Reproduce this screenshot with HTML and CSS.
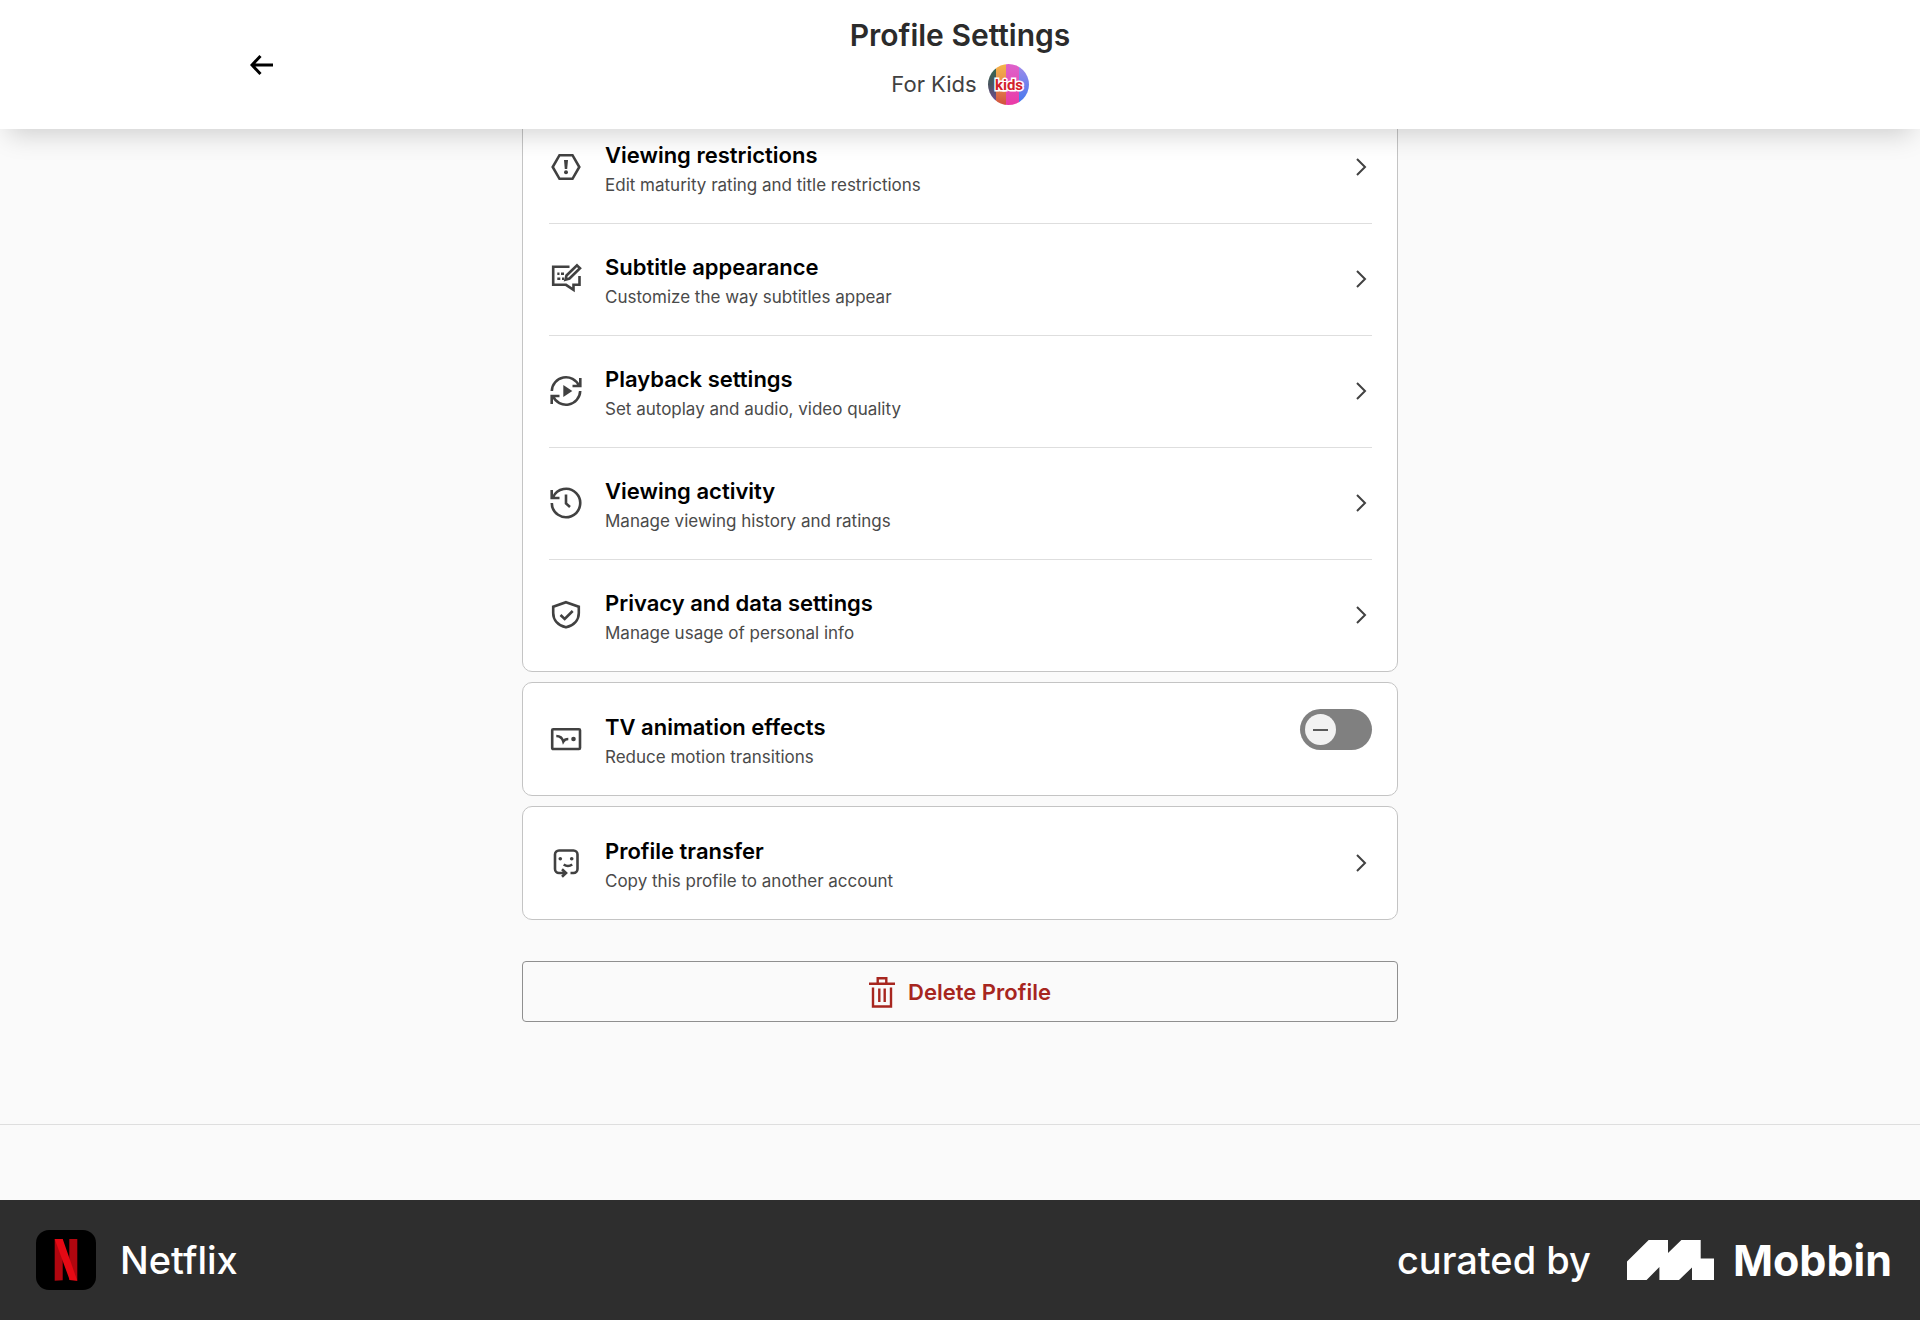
FILE: index.html
```html
<!DOCTYPE html>
<html lang="en">
<head>
<meta charset="utf-8">
<meta name="viewport" content="width=device-width, initial-scale=1">
<title>Profile Settings</title>
<link rel="stylesheet" href="styles.css">
</head>
<body>
<header class="header">
  <button class="back" type="button" aria-label="Back">
    <svg width="24" height="24" viewBox="0 0 24 24" fill="none" stroke="currentColor" stroke-width="3"><path d="M23 12H2M10.500 3L2 12l8.500 9"/></svg>
  </button>
  <div class="heading">
    <h1 class="title">Profile Settings</h1>
    <div class="profile">
      <span>For Kids</span>
      <svg class="avatar" viewBox="0 0 41 41" role="img" aria-label="Kids profile">
        <defs>
          <clipPath id="round"><circle cx="20.500" cy="20.500" r="20.500"/></clipPath>
          <linearGradient id="s1" x2="0" y2="1"><stop offset="0" stop-color="#2f6b4a"/><stop offset=".5" stop-color="#4a5560"/><stop offset="1" stop-color="#7a4a9c"/></linearGradient>
          <linearGradient id="s2" x2="0" y2="1"><stop offset="0" stop-color="#f4b54a"/><stop offset=".5" stop-color="#e98a4c"/><stop offset="1" stop-color="#d0503f"/></linearGradient>
          <linearGradient id="s3" x2="0" y2="1"><stop offset="0" stop-color="#dd62cb"/><stop offset="1" stop-color="#ea3aa6"/></linearGradient>
          <linearGradient id="s4" x2="0" y2="1"><stop offset="0" stop-color="#a28bea"/><stop offset="1" stop-color="#3f78ee"/></linearGradient>
        </defs>
        <g clip-path="url(#round)">
          <rect width="8" height="41" fill="url(#s1)"/>
          <rect x="8" width="10" height="41" fill="url(#s2)"/>
          <rect x="18" width="13" height="41" fill="url(#s3)"/>
          <rect x="31" width="10" height="41" fill="url(#s4)"/>
        </g>
        <text class="avatar-text" x="21" y="26" text-anchor="middle">kids</text>
      </svg>
    </div>
  </div>
</header>

<main class="main">
  <section class="card">
    <a class="row" href="#restrictions">
      <svg class="icon" viewBox="0 0 34 34"><path d="M10.500 5.200h13L30.300 17l-6.800 11.800h-13L3.700 17z"/><path class="solid" d="M15 10h4l-.8 9h-2.400z"/><circle class="solid" cx="17" cy="22.200" r="2"/></svg>
      <span class="text"><span class="name">Viewing restrictions</span><span class="note">Edit maturity rating and title restrictions</span></span>
      <svg class="chevron" viewBox="0 0 20 20"><path d="M5 2l8 8-8 8"/></svg>
    </a>
    <a class="row" href="#subtitles">
      <svg class="icon" viewBox="0 0 34 34"><path d="M20.500 4.800H4.200v18H17l7.500 5v-5h6V14"/><path d="M28 3.300l3 3L20.500 16.500l-4 1.200 1-4.200z"/><path d="M8.300 11.700h2.200M12 11.700h3M8.300 16.700h3M13 16.700h2"/></svg>
      <span class="text"><span class="name">Subtitle appearance</span><span class="note">Customize the way subtitles appear</span></span>
      <svg class="chevron" viewBox="0 0 20 20"><path d="M5 2l8 8-8 8"/></svg>
    </a>
    <a class="row" href="#playback">
      <svg class="icon" viewBox="0 0 34 34"><path d="M2.800 17A14.200 14.200 0 0 1 30 11.700M31.300 4v8H23.500M31.200 17A14.200 14.200 0 0 1 4 22.300M2.700 30v-8h7.800"/><path class="solid" d="M14.300 11v12l9-6z"/></svg>
      <span class="text"><span class="name">Playback settings</span><span class="note">Set autoplay and audio, video quality</span></span>
      <svg class="chevron" viewBox="0 0 20 20"><path d="M5 2l8 8-8 8"/></svg>
    </a>
    <a class="row" href="#activity">
      <svg class="icon" viewBox="0 0 34 34"><path d="M2.800 17A14.200 14.200 0 1 0 4 11.300M2.700 4v8h7.800M17 8.500V17.500l4 3.500"/></svg>
      <span class="text"><span class="name">Viewing activity</span><span class="note">Manage viewing history and ratings</span></span>
      <svg class="chevron" viewBox="0 0 20 20"><path d="M5 2l8 8-8 8"/></svg>
    </a>
    <a class="row" href="#privacy">
      <svg class="icon" viewBox="0 0 34 34"><path d="M17 4.200l12.800 4.500V15C29.800 22 25 27.500 17 29.300 9 27.500 4.200 22 4.200 15V8.700zM11.500 17l4.200 4 8-8"/></svg>
      <span class="text"><span class="name">Privacy and data settings</span><span class="note">Manage usage of personal info</span></span>
      <svg class="chevron" viewBox="0 0 20 20"><path d="M5 2l8 8-8 8"/></svg>
    </a>
  </section>

  <section class="card">
    <label class="row" for="tv-effects">
      <svg class="icon" viewBox="0 0 34 34"><rect x="3.200" y="7.200" width="27.800" height="19.800" rx="1"/><path d="M7.300 14c4 0 6 2 7 5.500 1-1.800 2.500-2.500 5-2.500"/><circle class="solid" cx="24.500" cy="17" r="2.300"/></svg>
      <span class="text"><span class="name">TV animation effects</span><span class="note">Reduce motion transitions</span></span>
      <input class="switch" id="tv-effects" type="checkbox" role="switch">
    </label>
  </section>

  <section class="card">
    <a class="row" href="#transfer">
      <svg class="icon" viewBox="0 0 34 34"><path d="M17 27H10a4 4 0 0 1-4-4V8.500a4 4 0 0 1 4-4h14.500a4 4 0 0 1 4 4V23a4 4 0 0 1-4 4H21.500M13 23.300l4 3.700-4 3.700M14.700 18.500c2.500 1.800 6 1.800 8.500 0"/><circle class="solid" cx="11.300" cy="12.800" r="1.800"/><circle class="solid" cx="22.700" cy="12.800" r="1.800"/></svg>
      <span class="text"><span class="name">Profile transfer</span><span class="note">Copy this profile to another account</span></span>
      <svg class="chevron" viewBox="0 0 20 20"><path d="M5 2l8 8-8 8"/></svg>
    </a>
  </section>

  <button class="delete" type="button">
    <svg width="26" height="32" viewBox="0 0 26 32" fill="none" stroke="currentColor" stroke-width="2.400"><path d="M0 7.700h26M8.700 7.500V2.200h8.600v5.300M4 11.500V30.500h18V11.500M10.300 12.500V26M15.700 12.500V26"/></svg>
    Delete Profile
  </button>
</main>

<div class="page-end"></div>

<footer class="bar">
  <div class="app">
    <svg width="60" height="60" viewBox="0 0 60 60" aria-hidden="true"><rect width="60" height="60" rx="13"/><path fill="#b1060f" d="M18.700 9h8v41.300l-8 .5zM33.300 9h8v41.800l-8-.8z"/><path fill="#e50914" d="M18.700 9h8l14.600 41.800c-2.500-.4-5-.6-7.600-.7z"/></svg>
    <span class="app-name">Netflix</span>
  </div>
  <div class="credit">
    <span class="credit-text">curated by</span>
    <svg width="87" height="40" viewBox="0 0 87 40" aria-hidden="true"><path fill="#fff" d="M0 21.500L21.700 0H41v13L54.400 0h19.300v18.500H87V40H65V27.500L52 40H32.400V27L19.600 40H0z"/></svg>
    <span class="brand">Mobbin</span>
  </div>
</footer>
</body>
</html>
```

FILE: styles.css
```css
* { box-sizing: border-box; }

body {
  margin: 0;
  min-height: 100vh;
  display: flex;
  flex-direction: column;
  background: #fafafa;
  color: #000;
  font-family: Inter, "Liberation Sans", sans-serif;
}

svg { flex: none; }

/* Header */
.header {
  position: sticky;
  top: 0;
  z-index: 1;
  display: grid;
  grid-template-columns: 1fr auto 1fr;
  align-items: center;
  padding: 15px 12.5% 23px;
  background: #fff;
  box-shadow: 0 14px 24px -8px rgba(0, 0, 0, .17);
}
.back {
  display: flex;
  justify-self: start;
  padding: 10px;
  margin-top: 8px;
  border: 0;
  background: none;
  color: #000;
}
.heading { text-align: center; }
.title {
  margin: 0;
  font-size: 30px;
  line-height: 40px;
  font-weight: 600;
  color: #2b2b2b;
}
.profile {
  display: flex;
  align-items: center;
  justify-content: center;
  gap: 11px;
  margin-top: 7px;
  height: 44px;
  font-size: 22px;
  color: #414141;
}
.avatar { width: 41px; height: 41px; }
.avatar-text {
  font-family: Roboto, "Liberation Sans", sans-serif;
  font-size: 15px;
  font-weight: 700;
  fill: #d3202b;
  stroke: #fff;
  stroke-width: 3px;
  paint-order: stroke;
}

/* Settings list */
.main {
  display: flex;
  flex-direction: column;
  gap: 10px;
  width: 100%;
  max-width: 876px;
  margin: -19px auto 0;
}
.card {
  padding: 0 25px 0 26px;
  border: 1px solid #c4c4c4;
  border-radius: 10px;
  background: #fff;
}
.row {
  display: flex;
  align-items: center;
  gap: 22px;
  padding: 26px 0;
  color: inherit;
  text-decoration: none;
}
.row + .row { border-top: 1px solid #dedede; padding: 25px 0 26px; }
.icon {
  width: 34px;
  height: 34px;
  fill: none;
  stroke: #414141;
  stroke-width: 2.6px;
}
.icon .solid { fill: #414141; stroke: none; }
.text { flex: 1; display: flex; flex-direction: column; }
.name { font-size: 22px; line-height: 36px; font-weight: 600; }
.note { font-size: 17px; line-height: 24px; color: #4a4a4a; }
.chevron {
  width: 20px;
  height: 20px;
  fill: none;
  stroke: #414141;
  stroke-width: 2px;
}
.switch {
  appearance: none;
  align-self: flex-start;
  display: flex;
  width: 72px;
  height: 41px;
  margin: 0;
  padding: 5px;
  border-radius: 21px;
  background: #808080;
}
.switch::before {
  content: "";
  width: 31px;
  height: 31px;
  border-radius: 50%;
  background: linear-gradient(#5a5a5a, #5a5a5a) center / 15px 2px no-repeat #f2f2f2;
}
.switch:checked { justify-content: flex-end; }

.delete {
  display: flex;
  align-items: center;
  justify-content: center;
  gap: 13px;
  height: 61px;
  margin-top: 31px;
  border: 1px solid #8f8f8f;
  border-radius: 4px;
  background: none;
  color: #a7261f;
  font: 600 22px/36px Inter, "Liberation Sans", sans-serif;
}

.page-end {
  flex: 1;
  min-height: 76px;
  margin-top: 102px;
  border-top: 1px solid #dedede;
}

/* Credit bar */
.bar {
  display: flex;
  align-items: center;
  justify-content: space-between;
  height: 120px;
  padding: 0 28px 0 36px;
  background: #2e2e2e;
  color: #fff;
}
.app, .credit { display: flex; align-items: center; }
.app { gap: 24px; }
.app-name, .credit-text { font-size: 38px; line-height: 48px; font-weight: 500; }
.credit-text { margin-right: 36px; }
.brand { margin-left: 19px; font-size: 43px; line-height: 48px; font-weight: 700; }
```
